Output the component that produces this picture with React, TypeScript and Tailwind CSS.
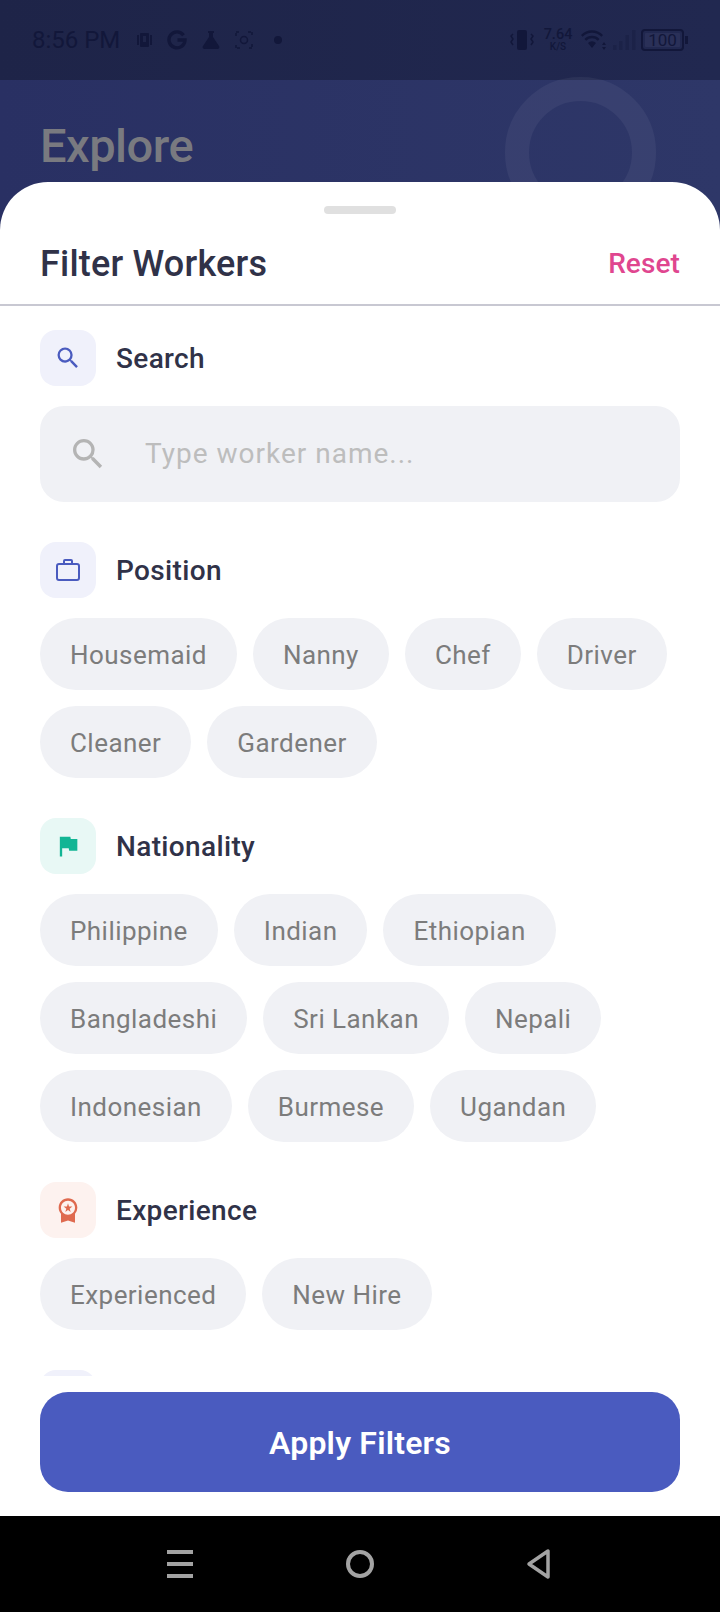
import { MdFlag, MdSearch, MdWorkspacePremium } from "react-icons/md";
import type { ReactNode } from "react";

const positions = ["Housemaid", "Nanny", "Chef", "Driver", "Cleaner", "Gardener"];
const nationalities = [
  "Philippine",
  "Indian",
  "Ethiopian",
  "Bangladeshi",
  "Sri Lankan",
  "Nepali",
  "Indonesian",
  "Burmese",
  "Ugandan",
];
const experience = ["Experienced", "New Hire"];

function Chips({ items }: { items: string[] }) {
  return (
    <div className="flex flex-wrap gap-4 mt-5">
      {items.map((item) => (
        <div
          key={item}
          className="h-[72px] px-[30px] pt-[2px] flex items-center rounded-full bg-[#f0f1f5] text-[26px] tracking-[0.45px] text-[#7c7c7c]"
        >
          {item}
        </div>
      ))}
    </div>
  );
}

function SectionTitle({ bg, icon, title }: { bg: string; icon: ReactNode; title: string }) {
  return (
    <div className="flex items-center gap-5">
      <div className={`w-14 h-14 rounded-2xl flex items-center justify-center ${bg}`}>{icon}</div>
      <span className="text-[28px] tracking-[0.35px] font-medium text-[#303248] pt-[2px]">{title}</span>
    </div>
  );
}

function StatusBar() {
  return (
    <div className="h-20 shrink-0 bg-gradient-to-r from-[#1e2448] to-[#212850] flex items-center pl-8 pr-8 text-[#12173a]">
      <span className="text-[24px] w-[88px] whitespace-nowrap">8:56 PM</span>
      <div className="flex items-center ml-[17px] gap-[14px]">
        <svg width="16" height="16" viewBox="0 0 16 16" fill="currentColor">
          <rect x="0" y="3" width="2" height="10" />
          <rect x="3" y="1" width="9" height="14" rx="1" />
          <rect x="13" y="3" width="2" height="10" />
          <rect x="6" y="4" width="3" height="6" fill="#1e2448" />
        </svg>
        <svg width="20" height="20" viewBox="0 0 20 20" fill="none" stroke="currentColor" strokeWidth="3.400">
          <path d="M16.500 5.200A8 8 0 1 0 18 10h-7.500" />
        </svg>
        <svg width="20" height="20" viewBox="0 0 20 20" fill="currentColor">
          <path d="M7 1h6v2h-1v4l6 9c1 1.500 0 3-1.500 3h-13C2 19 1 17.500 2 16l6-9V3H7z" />
        </svg>
        <svg width="18" height="18" viewBox="0 0 18 18" fill="none" stroke="currentColor" strokeWidth="1.500">
          <path d="M1 5V1h4M13 1h4v4M17 13v4h-4M5 17H1v-4" strokeDasharray="3 1" />
          <circle cx="9" cy="9" r="3.500" />
        </svg>
        <div className="w-2 h-2 ml-[7px] rounded-full bg-[#12173a]" />
      </div>
      <div className="ml-auto flex items-center">
        <svg width="24" height="22" viewBox="0 0 24 22" fill="currentColor">
          <rect x="7" y="1" width="10" height="20" rx="2" />
          <path d="M3 5l-2 2 2 3-2 3 2 3" fill="none" stroke="currentColor" strokeWidth="1.500" />
          <path d="M21 5l2 2-2 3 2 3-2 3" fill="none" stroke="currentColor" strokeWidth="1.500" />
        </svg>
        <div className="flex flex-col items-center ml-[10px] w-7 font-medium">
          <span className="text-[14.500px] leading-[14px]">7.64</span>
          <span className="text-[10px] leading-[10px]">K/S</span>
        </div>
        <svg className="ml-2" width="26" height="22" viewBox="0 0 26 22" fill="currentColor">
          <path d="M1 6a15 15 0 0 1 22 0l-1.600 1.800a13 13 0 0 0-18.800 0z" />
          <path d="M4.500 10a10.500 10.500 0 0 1 15 0l-1.700 1.800a8 8 0 0 0-11.600 0z" />
          <path d="M8 14a5.500 5.500 0 0 1 8 0l-4 5z" />
          <path d="M24 13l2 3h-4zM24 21l2-3h-4z" />
        </svg>
        <svg className="ml-[7px] opacity-30" width="23" height="22" viewBox="0 0 23 22" fill="currentColor">
          <rect x="0" y="16" width="3.500" height="5" />
          <rect x="6" y="12" width="3.500" height="9" />
          <rect x="12.500" y="6" width="3.500" height="15" />
          <rect x="19" y="1" width="3.500" height="20" />
        </svg>
        <div className="ml-[5px] w-[43px] h-[22px] rounded-[4px] border-2 border-[#12173a] p-[2px] flex">
          <div className="flex-1 bg-[#2a3058] rounded-[1px] flex items-center justify-center text-[17px] leading-none">
            100
          </div>
        </div>
        <div className="w-[3px] h-2 bg-[#12173a] ml-[1px]" />
      </div>
    </div>
  );
}

function Header() {
  return (
    <div className="relative h-[150px] -mb-12 shrink-0 bg-gradient-to-r from-[#293063] to-[#2e3768]">
      <div className="absolute left-[505px] top-[-3px] w-[151px] h-[151px] rounded-full border-[24px] border-white/[0.05]" />
      <div className="absolute left-[40px] top-[36px] text-[47px] leading-[60px] font-medium tracking-[-0.5px] text-[#797a80]">
        Explore
      </div>
    </div>
  );
}

export default function App() {
  return (
    <div className="w-[720px] h-[1612px] flex flex-col overflow-hidden bg-black font-['Roboto',sans-serif]">
      <StatusBar />
      <Header />
      <div className="relative flex-1 min-h-0 flex flex-col bg-white rounded-t-[48px]">
        <div className="w-[72px] h-2 rounded-full bg-[#e0e0e0] mx-auto mt-6 shrink-0" />
        <div className="flex items-center justify-between px-10 pt-[10px] h-[92px] shrink-0 border-b-2 border-[#c8c8d2]">
          <span className="text-[36px] tracking-[0.2px] font-medium text-[#303248]">Filter Workers</span>
          <span className="text-[28px] tracking-[0.1px] font-medium text-[#e0468f]">Reset</span>
        </div>
        <div className="flex-1 min-h-0 overflow-hidden px-10 pt-6">
          <SectionTitle bg="bg-[#f0f1fb]" title="Search" icon={<MdSearch size={28} className="text-[#4a5bbf]" />} />
          <div className="mt-5 h-24 rounded-3xl bg-[#f0f1f5] flex items-center pl-[28px]">
            <MdSearch size={40} className="text-[#b4b4b4]" />
            <span className="ml-[37px] text-[28px] tracking-[1px] text-[#bdbdbd]">Type worker name...</span>
          </div>
          <div className="mt-10">
            <SectionTitle
              bg="bg-[#f0f1fb]"
              title="Position"
              icon={
                <svg width="26" height="26" viewBox="0 0 26 26" fill="none" stroke="#4a5bbf" strokeWidth="2">
                  <rect x="2" y="7" width="22" height="16" rx="2" />
                  <path d="M9 7V4a1 1 0 0 1 1-1h6a1 1 0 0 1 1 1v3" />
                </svg>
              }
            />
            <Chips items={positions} />
          </div>
          <div className="mt-10">
            <SectionTitle bg="bg-[#e8f8f5]" title="Nationality" icon={<MdFlag size={28} className="text-[#12b594]" />} />
            <Chips items={nationalities} />
          </div>
          <div className="mt-10">
            <SectionTitle
              bg="bg-[#fdf2ef]"
              title="Experience"
              icon={<MdWorkspacePremium size={28} className="text-[#df6a4f]" />}
            />
            <Chips items={experience} />
          </div>
          <div className="mt-10 w-14 h-14 rounded-2xl bg-[#f0f1fb]" />
        </div>
        <div className="shrink-0 bg-white px-10 pt-4 pb-6">
          <div className="h-[100px] pt-[2px] rounded-[28px] bg-[#4a5bbf] flex items-center justify-center text-[32px] tracking-[0.2px] font-semibold text-white">
            Apply Filters
          </div>
        </div>
      </div>
      <div className="h-24 shrink-0 bg-black relative">
        <div className="absolute left-[167px] top-[34px] w-[26px] h-7 flex flex-col justify-between">
          <div className="h-1 bg-[#a3a3a3]" />
          <div className="h-1 bg-[#a3a3a3]" />
          <div className="h-1 bg-[#a3a3a3]" />
        </div>
        <div className="absolute left-[346px] top-[34px] w-7 h-7 rounded-full border-4 border-[#a3a3a3]" />
        <svg className="absolute left-[526px] top-[32px]" width="24" height="32" viewBox="0 0 24 32" fill="none" stroke="#a3a3a3" strokeWidth="3.500" strokeLinejoin="round">
          <path d="M22 3v26L3 16z" />
        </svg>
      </div>
    </div>
  );
}
